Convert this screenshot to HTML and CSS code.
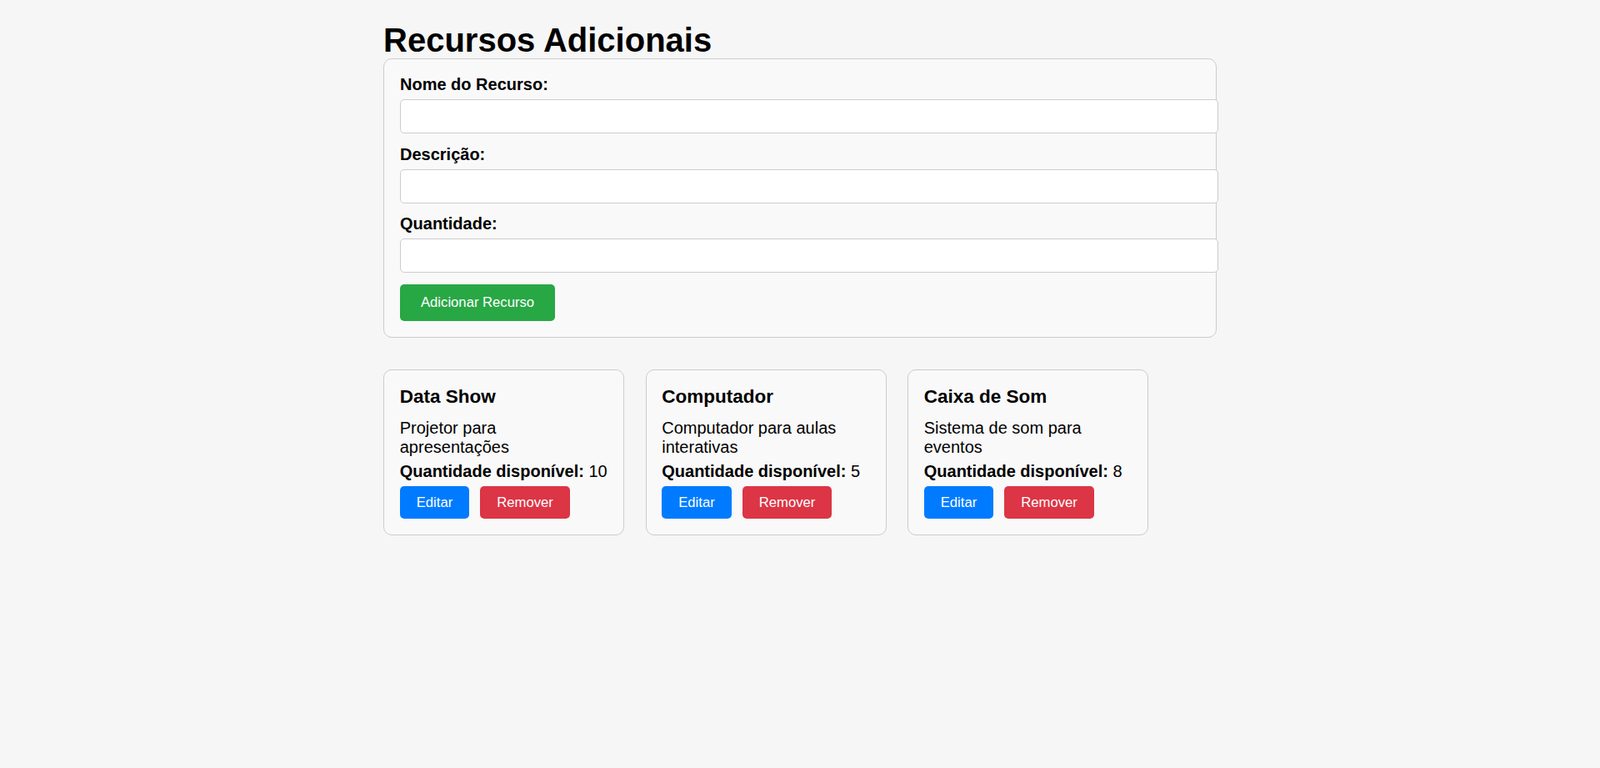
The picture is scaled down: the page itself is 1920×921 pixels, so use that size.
FILE: index.html
```html
<!DOCTYPE html>
<html lang="pt-BR">
<head>
<meta charset="UTF-8">
<title>Recursos Adicionais</title>
<link rel="stylesheet" href="styles.css">
</head>
<body>
<div class="container">
  <h1 class="title">Recursos Adicionais</h1>
  <form class="resource-form">
    <label class="field-label" for="nome">Nome do Recurso:</label>
    <input class="field-input" type="text" id="nome">
    <label class="field-label" for="descricao">Descrição:</label>
    <input class="field-input" type="text" id="descricao">
    <label class="field-label" for="quantidade">Quantidade:</label>
    <input class="field-input" type="number" id="quantidade">
    <button class="btn btn-add" type="button">Adicionar Recurso</button>
  </form>
  <div class="card-list">
    <div class="card">
      <h3 class="card-title">Data Show</h3>
      <p class="card-text">Projetor para apresentações</p>
      <p class="card-text card-qty"><strong>Quantidade disponível:</strong> 10</p>
      <div class="card-actions">
        <button class="btn btn-edit" type="button">Editar</button>
        <button class="btn btn-remove" type="button">Remover</button>
      </div>
    </div>
    <div class="card">
      <h3 class="card-title">Computador</h3>
      <p class="card-text">Computador para aulas interativas</p>
      <p class="card-text card-qty"><strong>Quantidade disponível:</strong> 5</p>
      <div class="card-actions">
        <button class="btn btn-edit" type="button">Editar</button>
        <button class="btn btn-remove" type="button">Remover</button>
      </div>
    </div>
    <div class="card">
      <h3 class="card-title">Caixa de Som</h3>
      <p class="card-text">Sistema de som para eventos</p>
      <p class="card-text card-qty"><strong>Quantidade disponível:</strong> 8</p>
      <div class="card-actions">
        <button class="btn btn-edit" type="button">Editar</button>
        <button class="btn btn-remove" type="button">Remover</button>
      </div>
    </div>
  </div>
</div>
</body>
</html>
```
FILE: styles.css
```css
html, body {
  margin: 0;
  padding: 0;
}
body {
  background: #f6f6f6;
  font-family: "Liberation Sans", Arial, sans-serif;
  color: #000;
}
.container {
  width: 1000px;
  margin: 0 auto;
  padding-top: 26px;
}
.title {
  font-size: 40px;
  line-height: 44px;
  font-weight: bold;
  margin: 0;
}
.resource-form {
  box-sizing: border-box;
  width: 100%;
  background: #f9f9f9;
  border: 1px solid #cccccc;
  border-radius: 10px;
  padding: 19px;
  margin-bottom: 38px;
}
.field-label {
  display: block;
  font-size: 20px;
  line-height: 23px;
  font-weight: bold;
  margin-bottom: 6px;
}
.field-input {
  display: block;
  box-sizing: content-box;
  width: 100%;
  height: 39px;
  padding: 0 10px;
  margin: 0 0 13.5px 0;
  border: 1px solid #cccccc;
  border-radius: 5px;
  background: #fff;
  font-family: "Liberation Sans", Arial, sans-serif;
  font-size: 16.67px;
  outline: none;
}
.btn {
  border: none;
  border-radius: 5px;
  color: #fff;
  font-family: "Liberation Sans", Arial, sans-serif;
  font-size: 16.67px;
  line-height: 19px;
  cursor: pointer;
}
.btn-add {
  display: block;
  background: #28a745;
  padding: 12.75px 25px;
}
.card-list {
  display: flex;
  gap: 25.5px;
  align-items: flex-start;
}
.card {
  box-sizing: border-box;
  width: 289px;
  background: #f9f9f9;
  border: 1px solid #cccccc;
  border-radius: 10px;
  padding: 19px 18.75px;
}
.card-title {
  font-size: 22.5px;
  line-height: 26px;
  font-weight: bold;
  margin: 0 0 12.5px 0;
}
.card-text {
  font-size: 20px;
  line-height: 23px;
  margin: 6.25px 0;
}
.card-qty {
  white-space: nowrap;
}
.card-actions {
  display: flex;
  gap: 13px;
}
.btn-edit {
  background: #007bff;
  padding: 10px 20px;
}
.btn-remove {
  background: #dc3545;
  padding: 10px 20px;
}
```
